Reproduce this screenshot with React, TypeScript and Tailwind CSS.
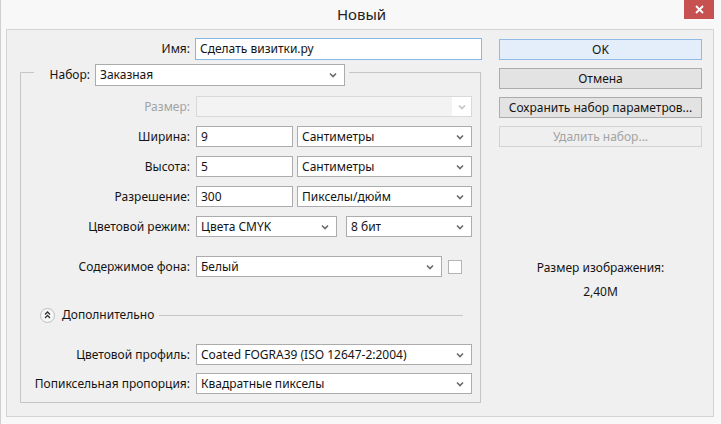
import React from "react";

const Chevron = ({ muted }: { muted?: boolean }) => (
  <svg width="8" height="6" viewBox="0 0 8 6" className="shrink-0">
    <path
      d="M1 1.5 L4 4.5 L7 1.5"
      fill="none"
      stroke={muted ? "#c4c4c4" : "#6a6a6a"}
      strokeWidth="1.6"
    />
  </svg>
);

function Select({ w, value, disabled }: { w: string; value?: string; disabled?: boolean }) {
  if (disabled) {
    return (
      <div className={`${w} h-[21px] border border-[#d9d9d9] bg-[#f3f3f3] flex items-center justify-end`}>
        <div className="h-full w-[19px] bg-white flex items-center justify-center">
          <Chevron muted />
        </div>
      </div>
    );
  }
  return (
    <div className={`${w} h-[21px] border border-[#acacac] bg-white flex items-center justify-between pl-[4px] pr-[7px]`}>
      <span className="truncate">{value}</span>
      <Chevron />
    </div>
  );
}

function Input({ w, value }: { w: string; value: string }) {
  return (
    <div className={`${w} h-[21px] border border-[#acacac] bg-white flex items-center pl-[4px]`}>
      {value}
    </div>
  );
}

function Row({ label, muted, mt, children }: { label: string; muted?: boolean; mt: string; children: React.ReactNode }) {
  return (
    <div className={`flex items-center h-[21px] ${mt}`}>
      <div className={`w-[169px] text-right ${muted ? "text-[#a3a3a3]" : ""}`}>{label}</div>
      <div className="ml-[6px] flex items-center">{children}</div>
    </div>
  );
}

function Button({ label, variant }: { label: string; variant?: "primary" | "disabled" }) {
  const cls =
    variant === "primary"
      ? "bg-[#e3eefa] border-[#8fbbe6]"
      : variant === "disabled"
      ? "bg-[#efefef] border-[#d3d3d3] text-[#a3a3a3]"
      : "bg-[#e3e3e3] border-[#acacac]";
  return (
    <div className={`h-[21px] w-full border flex items-center justify-center ${cls}`}>{label}</div>
  );
}

export default function App() {
  return (
    <div className="w-[721px] h-[424px] bg-[#f8f8f8] border-l border-[#cfcfcf] flex flex-col font-['Noto_Sans',sans-serif] text-[12px] leading-[16px] text-[#141414] overflow-hidden">
      {/* title bar */}
      <div className="h-[29px] flex items-start shrink-0">
        <div className="w-[38px]" />
        <div className="flex-1 text-center text-[15px] leading-[18px] pt-[5px] text-[#222]">Новый</div>
        <div className="w-[30px] h-[19px] mr-[7px] bg-[#c75050] flex items-center justify-center">
          <svg width="9" height="9" viewBox="0 0 9 9">
            <path d="M1 1 L8 8 M8 1 L1 8" stroke="white" strokeWidth="1.8" />
          </svg>
        </div>
      </div>

      {/* content panel */}
      <div className="ml-[5px] mr-[7px] h-[388px] border border-[#d3d3d3] bg-[#f0f0f0] flex">
        {/* left column */}
        <div className="w-[476px] pt-[8px] flex flex-col">
          <div className="flex items-center h-[22px]">
            <div className="w-[183px] text-right">Имя:</div>
            <div className="ml-[5px] w-[287px] h-[22px] border border-[#86b7e6] bg-white flex items-center pl-[4px]">
              Сделать визитки.ру
            </div>
          </div>

          <div className="mt-[12px] ml-[13px] w-[461px] border border-[#c6c6c6] pb-[8px] flex flex-col">
            {/* legend */}
            <div className="-mt-[9px] flex">
              <div className="ml-[13px] bg-[#f0f0f0] flex items-center pr-[4px]">
                <div className="w-[56px] text-right">Набор:</div>
                <div className="ml-[5px] w-[250px] h-[22px] border border-[#acacac] bg-white flex items-center justify-between pl-[4px] pr-[7px]">
                  <span>Заказная</span>
                  <Chevron />
                </div>
              </div>
            </div>

            <Row label="Размер:" muted mt="mt-[10px]">
              <Select w="w-[276px]" disabled />
            </Row>
            <Row label="Ширина:" mt="mt-[9px]">
              <Input w="w-[97px]" value="9" />
              <div className="ml-[4px]">
                <Select w="w-[175px]" value="Сантиметры" />
              </div>
            </Row>
            <Row label="Высота:" mt="mt-[9px]">
              <Input w="w-[97px]" value="5" />
              <div className="ml-[4px]">
                <Select w="w-[175px]" value="Сантиметры" />
              </div>
            </Row>
            <Row label="Разрешение:" mt="mt-[9px]">
              <Input w="w-[97px]" value="300" />
              <div className="ml-[4px]">
                <Select w="w-[175px]" value="Пикселы/дюйм" />
              </div>
            </Row>
            <Row label="Цветовой режим:" mt="mt-[9px]">
              <Select w="w-[141px]" value="Цвета CMYK" />
              <div className="ml-[9px]">
                <Select w="w-[126px]" value="8 бит" />
              </div>
            </Row>
            <Row label="Содержимое фона:" mt="mt-[19px]">
              <Select w="w-[246px]" value="Белый" />
              <div className="ml-[6px] w-[14px] h-[14px] border border-[#b4b4b4] bg-white" />
            </Row>

            {/* advanced */}
            <div className="mt-[30px] h-[16px] flex items-center">
              <div className="ml-[19px] w-[15px] h-[15px] rounded-full border border-[#bdbdbd] bg-[#f7f7f7] flex items-center justify-center">
                <svg width="7" height="8" viewBox="0 0 7 8">
                  <path d="M1 3.5 L3.5 1 L6 3.5 M1 7 L3.5 4.5 L6 7" fill="none" stroke="#333" strokeWidth="1.3" />
                </svg>
              </div>
              <div className="ml-[7px]">Дополнительно</div>
              <div className="flex-1 ml-[5px] mr-[17px] h-px bg-[#c6c6c6]" />
            </div>

            <Row label="Цветовой профиль:" mt="mt-[21px]">
              <Select w="w-[276px]" value="Coated FOGRA39 (ISO 12647-2:2004)" />
            </Row>
            <Row label="Попиксельная пропорция:" mt="mt-[8px]">
              <Select w="w-[276px]" value="Квадратные пикселы" />
            </Row>
          </div>
        </div>

        {/* right column */}
        <div className="ml-[16px] w-[203px] pt-[9px] flex flex-col">
          <div className="flex flex-col gap-[8px]">
            <Button label="OK" variant="primary" />
            <Button label="Отмена" />
            <Button label="Сохранить набор параметров..." />
            <Button label="Удалить набор..." variant="disabled" />
          </div>
          <div className="mt-[113px] text-center">Размер изображения:</div>
          <div className="mt-[8px] text-center">2,40M</div>
        </div>
      </div>
    </div>
  );
}
